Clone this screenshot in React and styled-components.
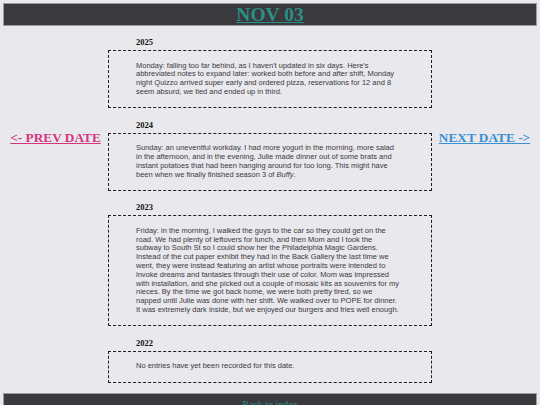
import React from 'react';
import styled, { createGlobalStyle } from 'styled-components';

const GlobalStyle = createGlobalStyle`
  html, body {
    margin: 0;
    padding: 0;
    background: #e9e8ed;
  }
  body {
    font-family: "Liberation Serif", "Times New Roman", serif;
  }
`;

const Page = styled.div`
  padding: 3px 3px 0;
  min-height: 100vh;
  box-sizing: border-box;
  display: flex;
  flex-direction: column;
`;

const Bar = styled.div`
  background: #3a393e;
  border: 1px solid #9c9ba0;
  text-align: center;
`;

const Title = styled.h1`
  margin: 0;
  font-size: 19.5px;
  line-height: 21px;
  font-weight: bold;
  a {
    color: #2b8f86;
  }
`;

const Columns = styled.div`
  display: grid;
  grid-template-columns: 1fr 324px 1fr;
  margin-top: 11px;
  align-items: start;
`;

const SideLink = styled.a`
  justify-self: center;
  margin-top: 93px;
  font-size: 13.3px;
  line-height: 15px;
  font-weight: bold;
  color: ${({ $color }) => $color};
  text-decoration: underline;
  white-space: nowrap;
`;

const Entries = styled.div`
  display: flex;
  flex-direction: column;
  gap: 11.5px;
`;

const Entry = styled.section``;

const Year = styled.h3`
  margin: 0 0 3px 28px;
  font-size: 8.5px;
  line-height: 10px;
  font-weight: bold;
  color: #111;
`;

const EntryBox = styled.div`
  border: 1px dashed #1e1e22;
  padding: 10.5px 31.8px 10.5px 27px;
  font-family: "Liberation Sans", Arial, sans-serif;
  font-size: 7.5px;
  line-height: 8.8px;
  color: #3a3a3e;
`;

const Footer = styled(Bar)`
  margin-top: 10px;
  flex: 1;
  border-bottom: none;
  a {
    font-size: 10px;
    line-height: 11px;
    color: #2b8f86;
  }
`;

const entries = [
  {
    year: 2025,
    text: (
      <>
        Monday: falling too far behind, as I haven't updated in six days. Here's abbreviated notes to expand
        later: worked both before and after shift, Monday night Quizzo arrived super early and ordered pizza,
        reservations for 12 and 8 seem absurd, we tied and ended up in third.
      </>
    ),
  },
  {
    year: 2024,
    text: (
      <>
        Sunday: an uneventful workday. I had more yogurt in the morning, more salad in the afternoon, and in
        the evening, Julie made dinner out of some brats and instant potatoes that had been hanging around for
        too long. This might have been when we finally finished season 3 of <i>Buffy</i>.
      </>
    ),
  },
  {
    year: 2023,
    text: (
      <>
        Friday: in the morning, I walked the guys to the car so they could get on the road. We had plenty of
        leftovers for lunch, and then Mom and I took the subway to South St so I could show her the
        Philadelphia Magic Gardens. Instead of the cut paper exhibit they had in the Back Gallery the last time
        we went, they were instead featuring an artist whose portraits were intended to invoke dreams and
        fantasies through their use of color. Mom was impressed with installation, and she picked out a couple
        of mosaic kits as souvenirs for my nieces. By the time we got back home, we were both pretty tired, so
        we napped until Julie was done with her shift. We walked over to POPE for dinner. It was extremely dark
        inside, but we enjoyed our burgers and fries well enough.
      </>
    ),
  },
  {
    year: 2022,
    text: <>No entries have yet been recorded for this date.</>,
  },
];

const App = () => (
  <>
    <GlobalStyle />
    <Page>
      <Bar>
        <Title>
          <a href="#">NOV 03</a>
        </Title>
      </Bar>
      <Columns>
        <SideLink href="#" $color="#d4367f">
          &lt;- PREV DATE
        </SideLink>
        <Entries>
          {entries.map((entry) => (
            <Entry key={entry.year}>
              <Year>{entry.year}</Year>
              <EntryBox>{entry.text}</EntryBox>
            </Entry>
          ))}
        </Entries>
        <SideLink href="#" $color="#3a8fd2">
          NEXT DATE -&gt;
        </SideLink>
      </Columns>
      <Footer>
        <a href="#">Back to index</a>
      </Footer>
    </Page>
  </>
);

export default App;
